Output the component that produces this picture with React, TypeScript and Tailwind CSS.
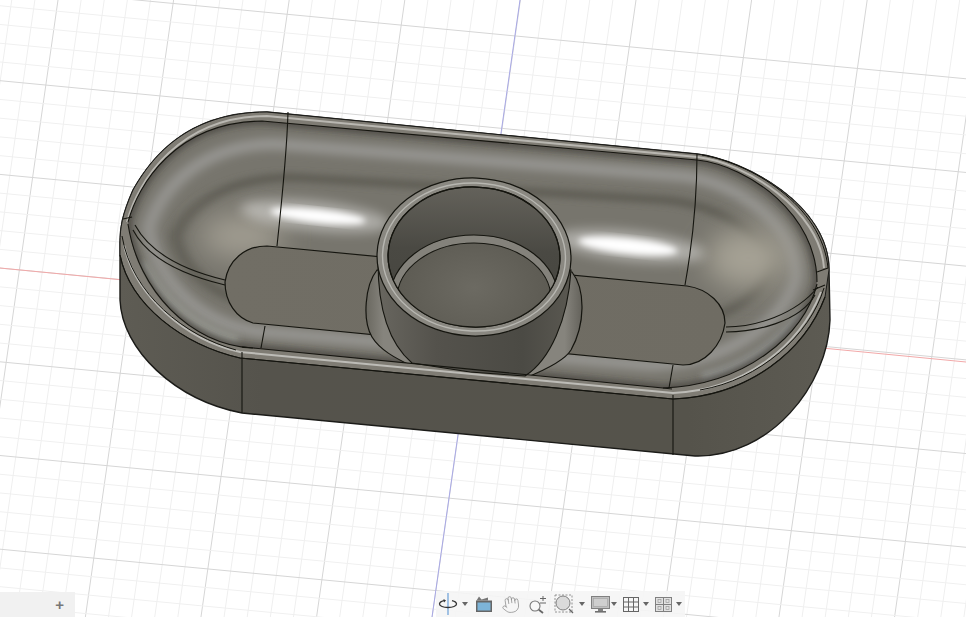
import { Hand } from "lucide-react";

const BODY =
  "M120 243C120 228 122 215 133 190C150 160 185 112 267 112L697 154C745 160 829 205 829 270L830 320C828 385 770 458 695 456L242 413C175 400 122 350 120 300Z";
const RIM =
  "M120 243C120 228 122 215 133 190C150 160 185 112 267 112L697 154C745 160 829 205 829 270L825 297C805 350 750 396 673 399L240 358C183 345 130 305 120 255Z";
const BOWL =
  "M128 222C138 185 175 122 262 121L697 160C750 166 817 215 817 282C805 335 745 385 663 388L253 348C190 345 135 290 128 222Z";
const FLOOR =
  "M267 246L687 286C708 289 725 304 725 323C722 345 705 365 683 365L253 323C236 318 225 302 225 282C228 260 245 246 267 246Z";

const xAt = (x0: number, y: number) => x0 - 0.143 * y;
const yAt = (y0: number, x: number) => y0 + 0.095 * x;

function Grid() {
  const verticals = Array.from({ length: 60 }, (_, i) => i - 8);
  const horizontals = Array.from({ length: 45 }, (_, i) => i);
  return (
    <g strokeWidth="1">
      {verticals.map((i) => {
        const x0 = 58 + (115.6 * i) / 5;
        const major = i % 5 === 0;
        return (
          <line key={`v${i}`} x1={xAt(x0, 0)} y1={0} x2={xAt(x0, 617)} y2={617} stroke={major ? "#d6d6d6" : "#efefef"} />
        );
      })}
      {horizontals.map((i) => {
        const y0 = -13 + (93.7 * i) / 5;
        const major = i % 5 === 0;
        return (
          <line key={`h${i}`} x1={0} y1={yAt(y0, 0)} x2={966} y2={yAt(y0, 966)} stroke={major ? "#d6d6d6" : "#f0f0f0"} />
        );
      })}
      <line x1={520} y1={0} x2={432} y2={617} stroke="#a9a9e6" />
      <line x1={0} y1={268} x2={966} y2={362} stroke="#f2a9a9" />
    </g>
  );
}

function Model() {
  return (
    <g>
      <path d={BODY} fill="url(#wall)" stroke="#1b1b18" strokeWidth="1.4" />
      <path d={RIM} fill="#7f7c74" stroke="#1b1b18" strokeWidth="1" />

      {/* bowl shading */}
      <path d={BOWL} fill="#77756d" />
      <g clipPath="url(#bowlClip)">
        <path d={BOWL} fill="none" stroke="#999894" strokeWidth="13" filter="url(#soft6)" transform="translate(472 255) scale(0.94 0.83) translate(-472 -255)" />
        <path d={BOWL} fill="none" stroke="#5d5b53" strokeWidth="13" filter="url(#soft6)" transform="translate(472 255) scale(0.86 0.58) translate(-472 -255)" />
        <ellipse cx="242" cy="236" rx="42" ry="22" fill="#a09c91" filter="url(#soft14)" />
        <ellipse cx="748" cy="258" rx="42" ry="30" fill="#a5a194" filter="url(#soft14)" />
        <ellipse cx="315" cy="216" rx="75" ry="15" fill="#ffffff" opacity="0.4" filter="url(#soft6)" transform="rotate(6 315 216)" />
        <ellipse cx="630" cy="246" rx="75" ry="15" fill="#ffffff" opacity="0.4" filter="url(#soft6)" transform="rotate(6 630 246)" />
        <ellipse cx="318" cy="216" rx="48" ry="7" fill="#ffffff" filter="url(#soft3)" transform="rotate(6 318 216)" />
        <ellipse cx="628" cy="246" rx="50" ry="8" fill="#ffffff" filter="url(#soft3)" transform="rotate(6 628 246)" />
        <path d="M142 262C165 305 200 330 238 340" fill="none" stroke="#94958f" strokeWidth="9" filter="url(#soft3)" />
        <path d="M802 312C778 345 742 368 702 377" fill="none" stroke="#8f908c" strokeWidth="9" filter="url(#soft3)" />
        <path d={BOWL} fill="none" stroke="#34332e" strokeWidth="5" opacity="0.8" filter="url(#soft3)" />

        {/* flat floor */}
        <path d={FLOOR} fill="url(#floor)" stroke="#15150f" strokeWidth="1.2" />

        {/* flange and cylinder */}
        <path d="M377 270C365 285 362 320 372 337C380 350 395 358 412 366L525 378C545 370 565 360 571 350C585 325 586 290 572 272Z" fill="url(#flange)" stroke="#15150f" strokeWidth="1.2" />
      </g>
      <path d="M378 262C378 300 385 340 412 363L470 372L525 376C550 360 568 320 571 270Z" fill="url(#cylinder)" stroke="#15150f" strokeWidth="1.1" />

      {/* ring and pocket */}
      <ellipse cx="474" cy="257" rx="97" ry="79" fill="#8a8881" stroke="#15150f" strokeWidth="1.2" transform="rotate(2 474 257)" />
      <ellipse cx="474" cy="257" rx="91.5" ry="74" fill="none" stroke="#c6c5c0" strokeWidth="1.4" opacity="0.75" transform="rotate(2 474 257)" />
      <ellipse cx="474" cy="257" rx="86" ry="70" fill="url(#pocket)" stroke="#15150f" strokeWidth="1.2" transform="rotate(2 474 257)" />
      <g clipPath="url(#pocketClip)">
        <ellipse cx="474" cy="298" rx="84" ry="63" fill="#84827b" stroke="#15150f" strokeWidth="1.1" />
        <ellipse cx="474" cy="299" rx="77" ry="56" fill="url(#pocketFloor)" stroke="#15150f" strokeWidth="1.1" />
      </g>
      <ellipse cx="474" cy="257" rx="86" ry="70" fill="none" stroke="#15150f" strokeWidth="1.2" transform="rotate(2 474 257)" />

      {/* front rim redrawn over the boss */}
      <path d="M120 255C130 305 183 345 240 358L673 399C750 396 805 350 825 297" fill="none" stroke="#15150f" strokeWidth="1.2" />
      <path d="M124 245C135 295 185 340 240 352L673 393C745 390 800 345 821 292" fill="none" stroke="#bdbcb7" strokeWidth="2" />
      <path d="M128 224C138 290 190 345 253 348L663 388C745 385 805 335 817 284" fill="none" stroke="#15150f" strokeWidth="1.1" />
      <path d="M122 236C132 295 185 336 236 350" fill="none" stroke="#15150f" strokeWidth="1" />
      <path d="M700 390C760 380 810 335 824 288" fill="none" stroke="#15150f" strokeWidth="1" />

      {/* back rim highlights */}
      <path d="M127 222C138 180 180 116 267 116L697 157C745 162 820 210 824 268" fill="none" stroke="#b9b7b1" strokeWidth="2" />
      <path d="M128 222C138 185 175 122 262 121L697 160C750 166 817 215 817 282" fill="none" stroke="#15150f" strokeWidth="1.1" />
      <path d="M702 155C750 163 822 205 828 268" fill="none" stroke="#15150f" strokeWidth="1" />

      {/* seams */}
      <g fill="none" stroke="#15150f" strokeWidth="1.1">
        <path d="M288 112C287 150 283 190 277 246" />
        <path d="M697 154C697 200 693 240 685 285" />
        <path d="M242 352L242 413" />
        <path d="M673 395L673 455" />
        <path d="M265 326L261 348" />
        <path d="M673 365L669 388" />
        <path d="M135 225C150 253 183 270 225 280" />
        <path d="M133 230C148 259 183 275 225 285" />
        <path d="M726 327C755 327 795 315 818 287" />
        <path d="M726 332C755 332 800 322 815 295" />
        <path d="M123 219L132 217" />
        <path d="M817 272L828 268" />
        <path d="M813 290L825 285" />
        <path d="M242 347L253 348" />
        <path d="M663 388L672 389" />
      </g>
    </g>
  );
}

function Caret() {
  return <span className="block w-0 h-0 border-l-[3px] border-r-[3px] border-t-[4px] border-l-transparent border-r-transparent border-t-[#666666]" />;
}

function CaretBox({ className }: { className: string }) {
  return (
    <div className={`flex justify-center ${className}`}>
      <Caret />
    </div>
  );
}

function Toolbar() {
  return (
    <div className="absolute left-[436px] top-[591px] h-[26px] w-[249px] flex items-center bg-[#f5f5f5]/90">
      <div className="w-[23px] flex justify-center">
        <svg width="20" height="22" viewBox="0 0 20 22" fill="none">
          <line x1="10" y1="0" x2="10" y2="22" stroke="#6a9fd8" strokeWidth="1.2" />
          <path d="M6 7.6C3 8.3 1.5 9.6 1.5 11C1.5 13 5.3 14.5 10 14.5C14.7 14.5 18.5 13 18.5 11C18.5 9.6 17 8.3 14 7.6" stroke="#333333" strokeWidth="1.3" />
          <path d="M8 7.5L5.5 6L6 9.5Z" fill="#333333" />
        </svg>
      </div>
      <CaretBox className="w-[12px]" />
      <div className="w-[26px] flex justify-center">
        <svg width="18" height="18" viewBox="0 0 18 18" fill="none">
          <path d="M1.5 5.5L4 1.5L6.5 4.5L13 2.5L13 5.5Z" fill="#777777" />
          <rect x="1" y="5.5" width="16" height="11.5" fill="#666666" />
          <rect x="2.5" y="7.5" width="13" height="8" fill="#7db4d8" />
        </svg>
      </div>
      <div className="w-[27px] flex justify-center">
        <Hand size={19} strokeWidth={0.9} color="#8a8a8a" className="rotate-[-8deg]" />
      </div>
      <div className="w-[26px] flex justify-center">
        <svg width="19" height="19" viewBox="0 0 19 19" fill="none">
          <circle cx="7" cy="11" r="5" fill="#f8f8f8" stroke="#777777" strokeWidth="1.1" />
          <line x1="10.8" y1="14.8" x2="15" y2="18" stroke="#666666" strokeWidth="1.8" />
          <path d="M12 3.5H18M15 1V6M12 8H18" stroke="#666666" strokeWidth="1" />
        </svg>
      </div>
      <div className="w-[27px] flex justify-center">
        <svg width="20" height="20" viewBox="0 0 20 20" fill="none">
          <rect x="1" y="1" width="17" height="17" stroke="#888888" strokeWidth="0.9" strokeDasharray="2 1.5" />
          <circle cx="9" cy="9" r="7" fill="#dadada" stroke="#808080" strokeWidth="1" />
          <line x1="15" y1="15" x2="19" y2="19" stroke="#666666" strokeWidth="1.3" />
        </svg>
      </div>
      <CaretBox className="w-[10px]" />
      <div className="ml-[3px] w-[20px] flex justify-center">
        <svg width="19" height="17" viewBox="0 0 19 17" fill="none">
          <rect x="0.5" y="0.5" width="18" height="12" fill="#c0c0c0" stroke="#808080" />
          <rect x="2.5" y="2.5" width="14" height="8" fill="#cfcfcf" stroke="#a0a0a0" strokeWidth="0.6" />
          <rect x="7" y="13" width="5" height="2" fill="#808080" />
          <rect x="4" y="15" width="11" height="1.6" fill="#707070" />
        </svg>
      </div>
      <CaretBox className="w-[8px]" />
      <div className="ml-[3px] w-[20px] flex justify-center">
        <svg width="16" height="15" viewBox="0 0 16 15" fill="none" stroke="#666666" strokeWidth="1">
          <rect x="0.5" y="0.5" width="15" height="14" fill="#f6f6f6" />
          <path d="M5.5 0.5V14.5M10.5 0.5V14.5M0.5 5H15.5M0.5 10H15.5" />
        </svg>
      </div>
      <CaretBox className="w-[10px]" />
      <div className="w-[24px] flex justify-center">
        <svg width="17" height="15" viewBox="0 0 17 15" fill="none">
          <rect x="0.5" y="0.5" width="16" height="14" fill="#e2e2e2" stroke="#808080" />
          <path d="M8.5 0.5V14.5M0.5 7.5H16.5" stroke="#808080" />
          <rect x="3" y="2.5" width="3" height="3" stroke="#999999" strokeWidth="0.7" />
          <rect x="11" y="2.5" width="3" height="3" stroke="#999999" strokeWidth="0.7" />
          <rect x="3" y="9.5" width="3" height="3" stroke="#999999" strokeWidth="0.7" />
          <rect x="11" y="9.5" width="3" height="3" stroke="#999999" strokeWidth="0.7" />
        </svg>
      </div>
      <CaretBox className="w-[7px]" />
    </div>
  );
}

export default function App() {
  return (
    <div className="relative w-[966px] h-[617px] overflow-hidden bg-white font-['Liberation_Sans',sans-serif]">
      <svg width="966" height="617" viewBox="0 0 966 617" className="block blur-[0.3px]">
        <defs>
          <filter id="soft3" x="-20%" y="-20%" width="140%" height="140%"><feGaussianBlur stdDeviation="3" /></filter>
          <filter id="soft6" x="-30%" y="-60%" width="160%" height="220%"><feGaussianBlur stdDeviation="6" /></filter>
          <filter id="soft14" x="-60%" y="-60%" width="220%" height="220%"><feGaussianBlur stdDeviation="14" /></filter>
          <clipPath id="bowlClip"><path d={BOWL} /></clipPath>
          <clipPath id="pocketClip"><ellipse cx="474" cy="257" rx="86" ry="70" transform="rotate(2 474 257)" /></clipPath>
          <linearGradient id="wall" x1="0" y1="0" x2="1" y2="0">
            <stop offset="0" stopColor="#5e5c54" />
            <stop offset="0.2" stopColor="#55534c" />
            <stop offset="0.8" stopColor="#55534b" />
            <stop offset="1" stopColor="#5d5b53" />
          </linearGradient>
          <linearGradient id="floor" x1="0" y1="0" x2="1" y2="0">
            <stop offset="0" stopColor="#716e65" />
            <stop offset="1" stopColor="#6f6c63" />
          </linearGradient>
          <linearGradient id="flange" x1="0" y1="0" x2="1" y2="0">
            <stop offset="0" stopColor="#6a6860" />
            <stop offset="0.08" stopColor="#86847d" />
            <stop offset="0.92" stopColor="#86847d" />
            <stop offset="1" stopColor="#64625b" />
          </linearGradient>
          <linearGradient id="cylinder" x1="0" y1="0" x2="1" y2="0">
            <stop offset="0" stopColor="#68665f" />
            <stop offset="0.3" stopColor="#54524c" />
            <stop offset="0.75" stopColor="#4b4a44" />
            <stop offset="1" stopColor="#5a5851" />
          </linearGradient>
          <linearGradient id="pocket" x1="0" y1="0" x2="0" y2="1">
            <stop offset="0" stopColor="#64625b" />
            <stop offset="0.45" stopColor="#4a4943" />
            <stop offset="1" stopColor="#45443e" />
          </linearGradient>
          <radialGradient id="pocketFloor" cx="0.5" cy="0.4" r="0.6">
            <stop offset="0" stopColor="#6c6a62" />
            <stop offset="1" stopColor="#5a5850" />
          </radialGradient>
        </defs>
        <Grid />
        <Model />
      </svg>

      <div className="absolute left-0 top-[592px] h-[25px] w-[75px] flex items-center justify-end pr-[11px] bg-[#f1f1f1] text-[15px] leading-none font-bold text-[#777777]">
        +
      </div>
      <Toolbar />
    </div>
  );
}
